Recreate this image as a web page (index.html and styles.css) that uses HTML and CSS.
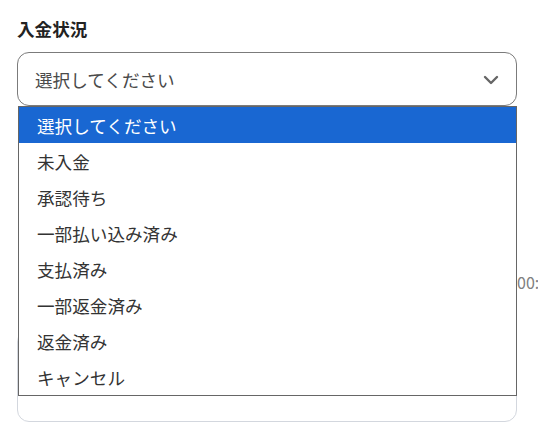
FILE: index.html
```html
<!DOCTYPE html>
<html lang="ja">
<head>
<meta charset="utf-8">
<link rel="stylesheet" href="styles.css">
</head>
<body>
<div class="form">
  <div class="field">
    <div class="label">入金状況</div>
    <div class="select-wrap">
      <div class="select">
        <span class="select-text">選択してください</span>
        <svg class="chevron" width="16" height="10" viewBox="0 0 16 10"><polyline points="2,2 8,8 14,2" fill="none" stroke="#666" stroke-width="2.4" stroke-linecap="round" stroke-linejoin="round"/></svg>
      </div>
      <ul class="dropdown">
        <li class="opt selected">選択してください</li>
        <li class="opt">未入金</li>
        <li class="opt">承認待ち</li>
        <li class="opt">一部払い込み済み</li>
        <li class="opt">支払済み</li>
        <li class="opt">一部返金済み</li>
        <li class="opt">返金済み</li>
        <li class="opt">キャンセル</li>
      </ul>
    </div>
  </div>
  <div class="under">
    <div class="time-row">
      <div class="input"></div>
      <span class="time-text">00:</span>
    </div>
    <div class="textarea"></div>
  </div>
</div>
</body>
</html>
```
FILE: styles.css
```css
html, body {
  margin: 0;
  padding: 0;
  background: #fff;
  overflow: hidden;
}
body {
  font-family: "Noto Sans CJK JP", "Noto Sans", sans-serif;
  color: #333;
  width: 538px;
  height: 430px;
}
.form {
  padding: 17px 21px 0 17px;
}
.label {
  font-size: 17.6px;
  font-weight: 700;
  color: #222;
  line-height: 24px;
}
.select-wrap {
  position: relative;
  margin-top: 11px;
}
.select {
  height: 52px;
  border: 1px solid #7b7b7b;
  border-radius: 12px;
  display: flex;
  align-items: center;
  justify-content: space-between;
  padding: 0 17px 0 17px;
}
.select-text {
  font-size: 17.6px;
  color: #4a4a4a;
}
.chevron {
  margin-top: 2px;
}
.dropdown {
  position: absolute;
  top: 100%;
  left: 1px;
  right: 0;
  margin: 0;
  padding: 0;
  list-style: none;
  background: #fff;
  border: 1px solid #666;
  z-index: 10;
}
.opt {
  height: 36px;
  display: flex;
  align-items: center;
  padding-left: 18px;
  font-size: 17.6px;
  color: #333;
}
.opt.selected {
  background: #1967d2;
  color: #fff;
}
.under {
  margin-top: 166px;
}
.time-row {
  display: flex;
  align-items: center;
  height: 20px;
}
.input {
  width: 500px;
  flex: none;
}
.time-text {
  font-size: 16px;
  color: #808080;
  white-space: nowrap;
}
.textarea {
  box-sizing: border-box;
  margin-top: 38px;
  height: 92px;
  border: 1px solid #d3d7de;
  border-radius: 12px;
}
```
